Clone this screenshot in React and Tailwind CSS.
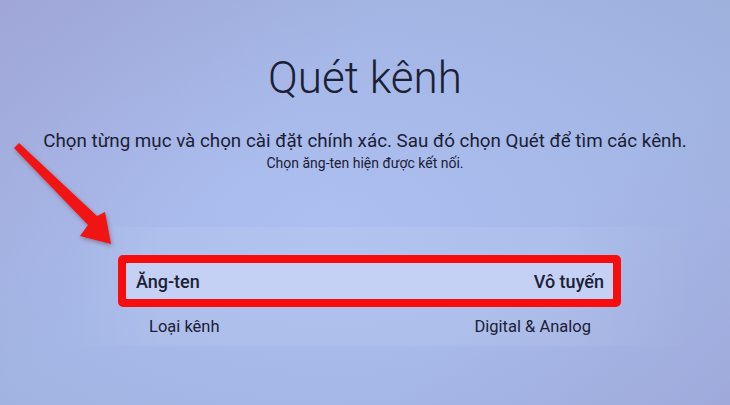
const font = { fontFamily: 'Roboto, "Noto Sans", sans-serif' };

function Arrow() {
  return (
    <svg
      className="absolute left-0 top-0 pointer-events-none"
      width="130"
      height="260"
      viewBox="0 0 130 260"
    >
      <polygon
        points="14,148 19,143 97,216 105,212 111,244 80,236 88,225"
        fill="#f01414"
        style={{ filter: 'drop-shadow(1px 2px 2px rgba(80,0,0,0.35))' }}
      />
    </svg>
  );
}

export default function App() {
  return (
    <div
      className="relative w-[730px] h-[405px] overflow-hidden text-[#1c2035] bg-[linear-gradient(135deg,rgba(160,152,205,0.45)_0%,rgba(160,152,205,0)_35%,rgba(160,152,205,0)_70%,rgba(160,155,212,0.35)_100%),radial-gradient(ellipse_at_45%_55%,#adbff0_0%,#a7b9e9_45%,#9db1dd_100%)]"
      style={font}
    >
      <div className="flex flex-col items-center">
        <h1 className="pt-[56px] text-[44px] leading-none font-light">Quét kênh</h1>
        <p className="mt-[32px] text-[18.8px] leading-none whitespace-nowrap">
          Chọn từng mục và chọn cài đặt chính xác. Sau đó chọn Quét để tìm các kênh.
        </p>
        <p className="mt-[5px] text-[14px] leading-none">Chọn ăng-ten hiện được kết nối.</p>
      </div>

      <div className="mt-[57px] pt-[28px] pb-[11px] bg-[linear-gradient(90deg,rgba(255,255,255,0)_10%,rgba(255,255,255,0.07)_22%,rgba(255,255,255,0.07)_78%,rgba(255,255,255,0)_95%)]">
        <div className="ml-[118px] w-[503px]">
          <div className="h-[52px] border-[8px] border-[#f70d0d] rounded-[5px] bg-[#c4d0f4] flex items-center justify-between pl-[10px] pr-[9px] pt-[2px] text-[18px] font-medium leading-none">
            <span>Ăng-ten</span>
            <span>Vô tuyến</span>
          </div>
          <div className="mt-[12px] flex items-center justify-between pl-[31px] pr-[30px] text-[16.5px] leading-none">
            <span>Loại kênh</span>
            <span>Digital &amp; Analog</span>
          </div>
        </div>
      </div>

      <Arrow />
    </div>
  );
}
